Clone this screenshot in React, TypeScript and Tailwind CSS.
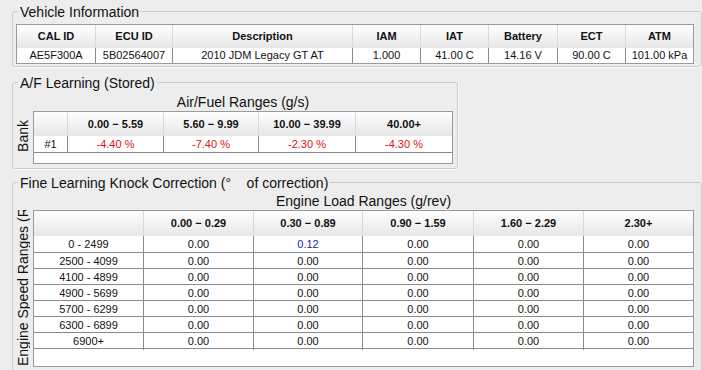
import React from "react";

const F = "font-['Liberation_Sans',Arial,sans-serif]";

function GroupTitle({ children }: { children: React.ReactNode }) {
  return (
    <div className="-mt-[8px] ml-[5px] px-[2px] w-fit bg-[#ededed] text-[14px] leading-[16px] text-[#111] whitespace-nowrap">
      {children}
    </div>
  );
}

const vehCols = "grid grid-cols-[78px_77px_180px_68px_68px_69px_68px_68px]";
const vehHead = ["CAL ID", "ECU ID", "Description", "IAM", "IAT", "Battery", "ECT", "ATM"];
const vehData = ["AE5F300A", "5B02564007", "2010 JDM Legacy GT AT", "1.000", "41.00 C", "14.16 V", "90.00 C", "101.00 kPa"];

const afCols = "grid grid-cols-[33px_96px_95px_97px_97px]";
const afHead = ["", "0.00 \u2212 5.59", "5.60 \u2212 9.99", "10.00 \u2212 39.99", "40.00+"];
const afData = ["#1", "-4.40 %", "-7.40 %", "-2.30 %", "-4.30 %"];

const kCols = "grid grid-cols-[109px_110px_109px_111px_110px_110px]";
const kHead = ["", "0.00 \u2212 0.29", "0.30 \u2212 0.89", "0.90 \u2212 1.59", "1.60 \u2212 2.29", "2.30+"];
const kRows = ["0 - 2499", "2500 - 4099", "4100 - 4899", "4900 - 5699", "5700 - 6299", "6300 - 6899", "6900+"];

export default function App() {
  return (
    <div className={`w-[702px] h-[370px] overflow-hidden bg-[#ededed] ${F} pl-[12px] pt-[11px]`}>
      {/* Vehicle Information */}
      <div className="w-[690px] border border-[#cbcbcb] rounded-[3px] shadow-[1px_1px_0_#fafafa] pb-[2px]">
        <GroupTitle>Vehicle Information</GroupTitle>
        <div className="mt-[4px] ml-[3px] w-[678px] border border-[#9a9a9a] bg-white">
          <div className={`${vehCols} h-[23px] bg-gradient-to-b from-white to-[#e6e6e6]`}>
            {vehHead.map((h, i) => (
              <div
                key={h}
                className={`flex items-center justify-center font-bold text-[11px] text-[#111] ${i > 0 ? "border-l border-[#d9d9d9]" : ""}`}
              >
                {h}
              </div>
            ))}
          </div>
          <div className={`${vehCols} h-[15px]`}>
            {vehData.map((d, i) => (
              <div
                key={i}
                className={`flex items-center justify-center text-[11px] leading-[15px] text-[#111] ${i > 0 ? "border-l border-[#8a8a8a]" : ""}`}
              >
                {d}
              </div>
            ))}
          </div>
        </div>
      </div>

      {/* A/F Learning */}
      <div className="mt-[15px] w-[446px] border border-[#cbcbcb] rounded-[3px] shadow-[1px_1px_0_#fafafa] pb-[4px]">
        <GroupTitle>A/F Learning (Stored)</GroupTitle>
        <div className="flex">
          <div className="w-[20px] shrink-0 flex flex-col">
            <div className="h-[20px]" />
            <div className="h-[53px] flex flex-col justify-end items-center">
              <span className="[writing-mode:vertical-rl] rotate-180 whitespace-nowrap h-max text-[14px] leading-[14px] text-[#111] mb-[12px]">
                Bank
              </span>
            </div>
          </div>
          <div className="flex flex-col">
            <div className="h-[20px] w-[420px] text-center text-[14px] leading-[22px] text-[#111]">
              Air/Fuel Ranges (g/s)
            </div>
            <div className="w-[420px] border border-[#9a9a9a] bg-white">
              <div className={`${afCols} h-[24px] bg-gradient-to-b from-white to-[#e6e6e6]`}>
                {afHead.map((h, i) => (
                  <div
                    key={i}
                    className={`flex items-center justify-center font-bold text-[11px] text-[#111] ${i > 0 ? "border-l border-[#d9d9d9]" : ""}`}
                  >
                    {h}
                  </div>
                ))}
              </div>
              <div className={`${afCols} h-[17px] border-b border-[#8a8a8a]`}>
                {afData.map((d, i) => (
                  <div
                    key={i}
                    className={`flex items-center justify-center text-[11px] ${i === 0 ? "text-[#111]" : "text-[#e01010] border-l border-[#8a8a8a]"}`}
                  >
                    {d}
                  </div>
                ))}
              </div>
              <div className="h-[10px]" />
            </div>
          </div>
        </div>
      </div>

      {/* Fine Learning Knock Correction */}
      <div className="mt-[13px] w-[690px] h-[200px] border border-[#cbcbcb] rounded-[3px] shadow-[1px_1px_0_#fafafa]">
        <GroupTitle>Fine Learning Knock Correction (°&nbsp;&nbsp;&nbsp;&nbsp;of correction)</GroupTitle>
        <div className="flex flex-col">
          <div className="ml-[20px] h-[19px] w-[661px] text-center text-[14px] leading-[20px] text-[#111]">
            Engine Load Ranges (g/rev)
          </div>
          <div className="flex h-[157px]">
            <div className="w-[20px] shrink-0 flex flex-col justify-end items-center overflow-hidden">
              <span className="[writing-mode:vertical-rl] rotate-180 whitespace-nowrap text-[14px] leading-[14px] text-[#111] max-h-full overflow-hidden mb-[1px]">
                Engine Speed Ranges (RPM)
              </span>
            </div>
            <div className="w-[661px] h-[157px] border border-[#9a9a9a] bg-white">
              <div className={`${kCols} h-[25px] bg-gradient-to-b from-white to-[#e6e6e6]`}>
                {kHead.map((h, i) => (
                  <div
                    key={i}
                    className={`flex items-center justify-center font-bold text-[11px] text-[#111] ${i > 0 ? "border-l border-[#d9d9d9]" : ""}`}
                  >
                    {h}
                  </div>
                ))}
              </div>
              {kRows.map((r, ri) => (
                <div
                  key={r}
                  className={`${kCols} ${ri === 0 ? "h-[16px]" : "h-[16px] border-t border-[#8a8a8a]"} ${ri === kRows.length - 1 ? "h-[17px] border-b" : ""}`}
                >
                  {[r, "0.00", ri === 0 ? "0.12" : "0.00", "0.00", "0.00", "0.00"].map((d, i) => (
                    <div
                      key={i}
                      className={`flex items-center justify-center text-[11px] ${i > 0 ? "border-l border-[#8a8a8a]" : ""} ${ri === 0 && i === 2 ? "text-[#2020c8]" : "text-[#111]"}`}
                    >
                      {d}
                    </div>
                  ))}
                </div>
              ))}
            </div>
          </div>
        </div>
      </div>
    </div>
  );
}
